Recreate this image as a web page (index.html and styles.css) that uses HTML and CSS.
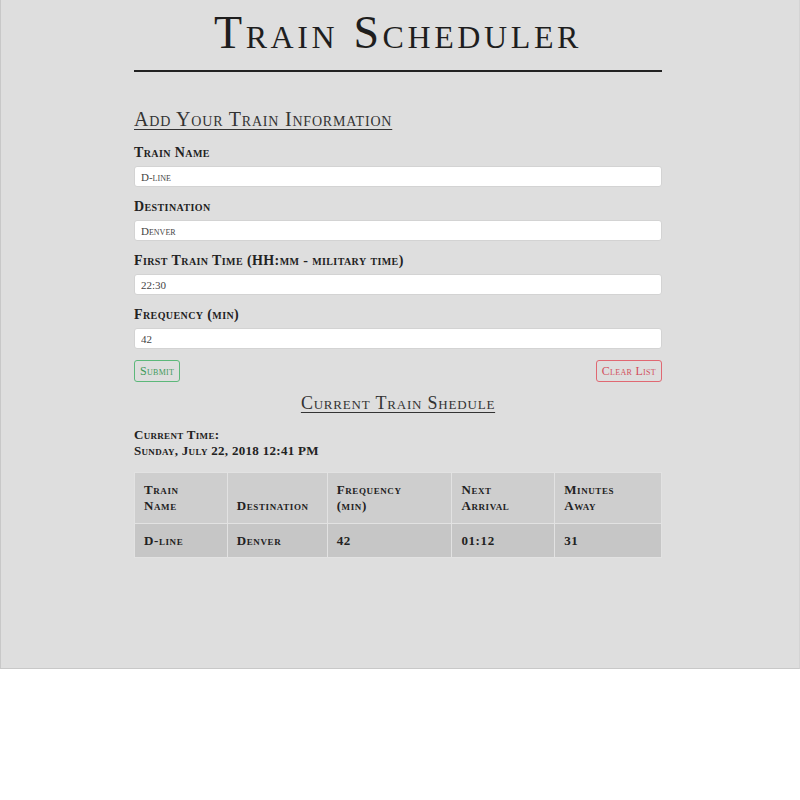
FILE: index.html
```html
<!DOCTYPE html>
<html lang="en">
<head>
<meta charset="utf-8">
<title>Train Scheduler</title>
<link rel="stylesheet" href="styles.css">
</head>
<body>
<div class="page">
  <div class="container">
    <h1 class="title">Train Scheduler</h1>
    <hr class="rule">
    <h2 class="section-title">Add Your Train Information</h2>
    <form class="train-form">
      <div class="field">
        <label class="label">Train Name</label>
        <input class="input input-caps" type="text" value="D-line">
      </div>
      <div class="field">
        <label class="label">Destination</label>
        <input class="input input-caps" type="text" value="Denver">
      </div>
      <div class="field">
        <label class="label">First Train Time (HH:mm - military time)</label>
        <input class="input" type="text" value="22:30">
      </div>
      <div class="field">
        <label class="label">Frequency (min)</label>
        <input class="input" type="text" value="42">
      </div>
      <div class="actions">
        <button type="button" class="btn btn-submit">Submit</button>
        <button type="button" class="btn btn-clear">Clear List</button>
      </div>
    </form>
    <h2 class="schedule-title">Current Train Shedule</h2>
    <div class="clock">
      <div>Current Time:</div>
      <div>Sunday, July 22, 2018 12:41 PM</div>
    </div>
    <table class="schedule">
      <thead>
        <tr>
          <th class="c1">Train<br>Name</th>
          <th class="c2">Destination</th>
          <th class="c3">Frequency<br>(min)</th>
          <th class="c4">Next<br>Arrival</th>
          <th class="c5">Minutes<br>Away</th>
        </tr>
      </thead>
      <tbody>
        <tr>
          <td>D-line</td>
          <td>Denver</td>
          <td>42</td>
          <td>01:12</td>
          <td>31</td>
        </tr>
      </tbody>
    </table>
  </div>
</div>
</body>
</html>
```

FILE: styles.css
```css
* { box-sizing: border-box; }

html, body {
  margin: 0;
  padding: 0;
  background: #ffffff;
}

body {
  font-family: "Liberation Serif", "DejaVu Serif", serif;
  font-variant: small-caps;
  color: #222222;
}

.page {
  background: #dedede;
  border: 1px solid #c8c8c8;
  border-top: none;
  border-right-color: #d4d4d4;
  min-height: 669px;
}

.container {
  width: 528px;
  margin-left: 133px;
  padding-top: 6px;
}

.title {
  margin: 0;
  text-align: center;
  font-weight: normal;
  font-size: 46px;
  line-height: 54px;
  letter-spacing: 3.6px;
  color: #1e1e1e;
}

.rule {
  margin: 10px 0 0 0;
  border: none;
  border-top: 2px solid #222222;
  height: 0;
}

.section-title {
  margin: 35px 0 0 0;
  font-weight: normal;
  font-size: 20px;
  line-height: 24px;
  letter-spacing: 0.8px;
  text-decoration: underline;
  text-underline-offset: 3px;
  text-decoration-thickness: 1px;
  color: #333333;
}

.train-form {
  margin-top: 13px;
}

.field {
  display: flex;
  flex-direction: column;
  margin-bottom: 11px;
}

.label {
  font-weight: bold;
  font-size: 14px;
  line-height: 18px;
  letter-spacing: 0.4px;
  margin-bottom: 4px;
}

.input {
  height: 21px;
  width: 100%;
  border: 1px solid #d3d3d3;
  border-radius: 3px;
  background: #ffffff;
  padding: 0 6px;
  font-family: "Liberation Serif", "DejaVu Serif", serif;
  font-variant: normal;
  font-size: 11px;
  color: #444444;
}

.input-caps {
  font-variant: small-caps;
}

.actions {
  display: flex;
  justify-content: space-between;
  margin-top: 1px;
}

.btn {
  height: 22px;
  border-radius: 3px;
  background: transparent;
  font-family: "Liberation Serif", "DejaVu Serif", serif;
  font-variant: small-caps;
  font-size: 12px;
  padding: 0 5px;
  letter-spacing: 0.3px;
}

.btn-submit {
  border: 1px solid #5cb87a;
  color: #3f9a5a;
}

.btn-clear {
  border: 1px solid #e06872;
  color: #d24f5c;
}

.schedule-title {
  margin: 10px 0 0 0;
  text-align: center;
  font-weight: normal;
  font-size: 18px;
  line-height: 22px;
  letter-spacing: 0.8px;
  text-decoration: underline;
  text-underline-offset: 3px;
  text-decoration-thickness: 1px;
  color: #333333;
}

.clock {
  margin-top: 13px;
  font-weight: bold;
  font-size: 13px;
  line-height: 16px;
  letter-spacing: 0.3px;
}

.schedule {
  margin-top: 13px;
  width: 100%;
  border-collapse: collapse;
  font-size: 13px;
  font-weight: bold;
  letter-spacing: 0.6px;
}

.schedule th,
.schedule td {
  text-align: left;
  border: 1px solid #e2e2e2;
  padding: 0 9px;
}

.schedule th {
  background: #cecece;
  vertical-align: bottom;
  height: 51px;
  padding-bottom: 9px;
  line-height: 16px;
}

.schedule td {
  background: #c6c6c6;
  height: 34px;
}

.c1 { width: 93px; }
.c2 { width: 100px; }
.c3 { width: 125px; }
.c4 { width: 103px; }
.c5 { width: 107px; }
```
